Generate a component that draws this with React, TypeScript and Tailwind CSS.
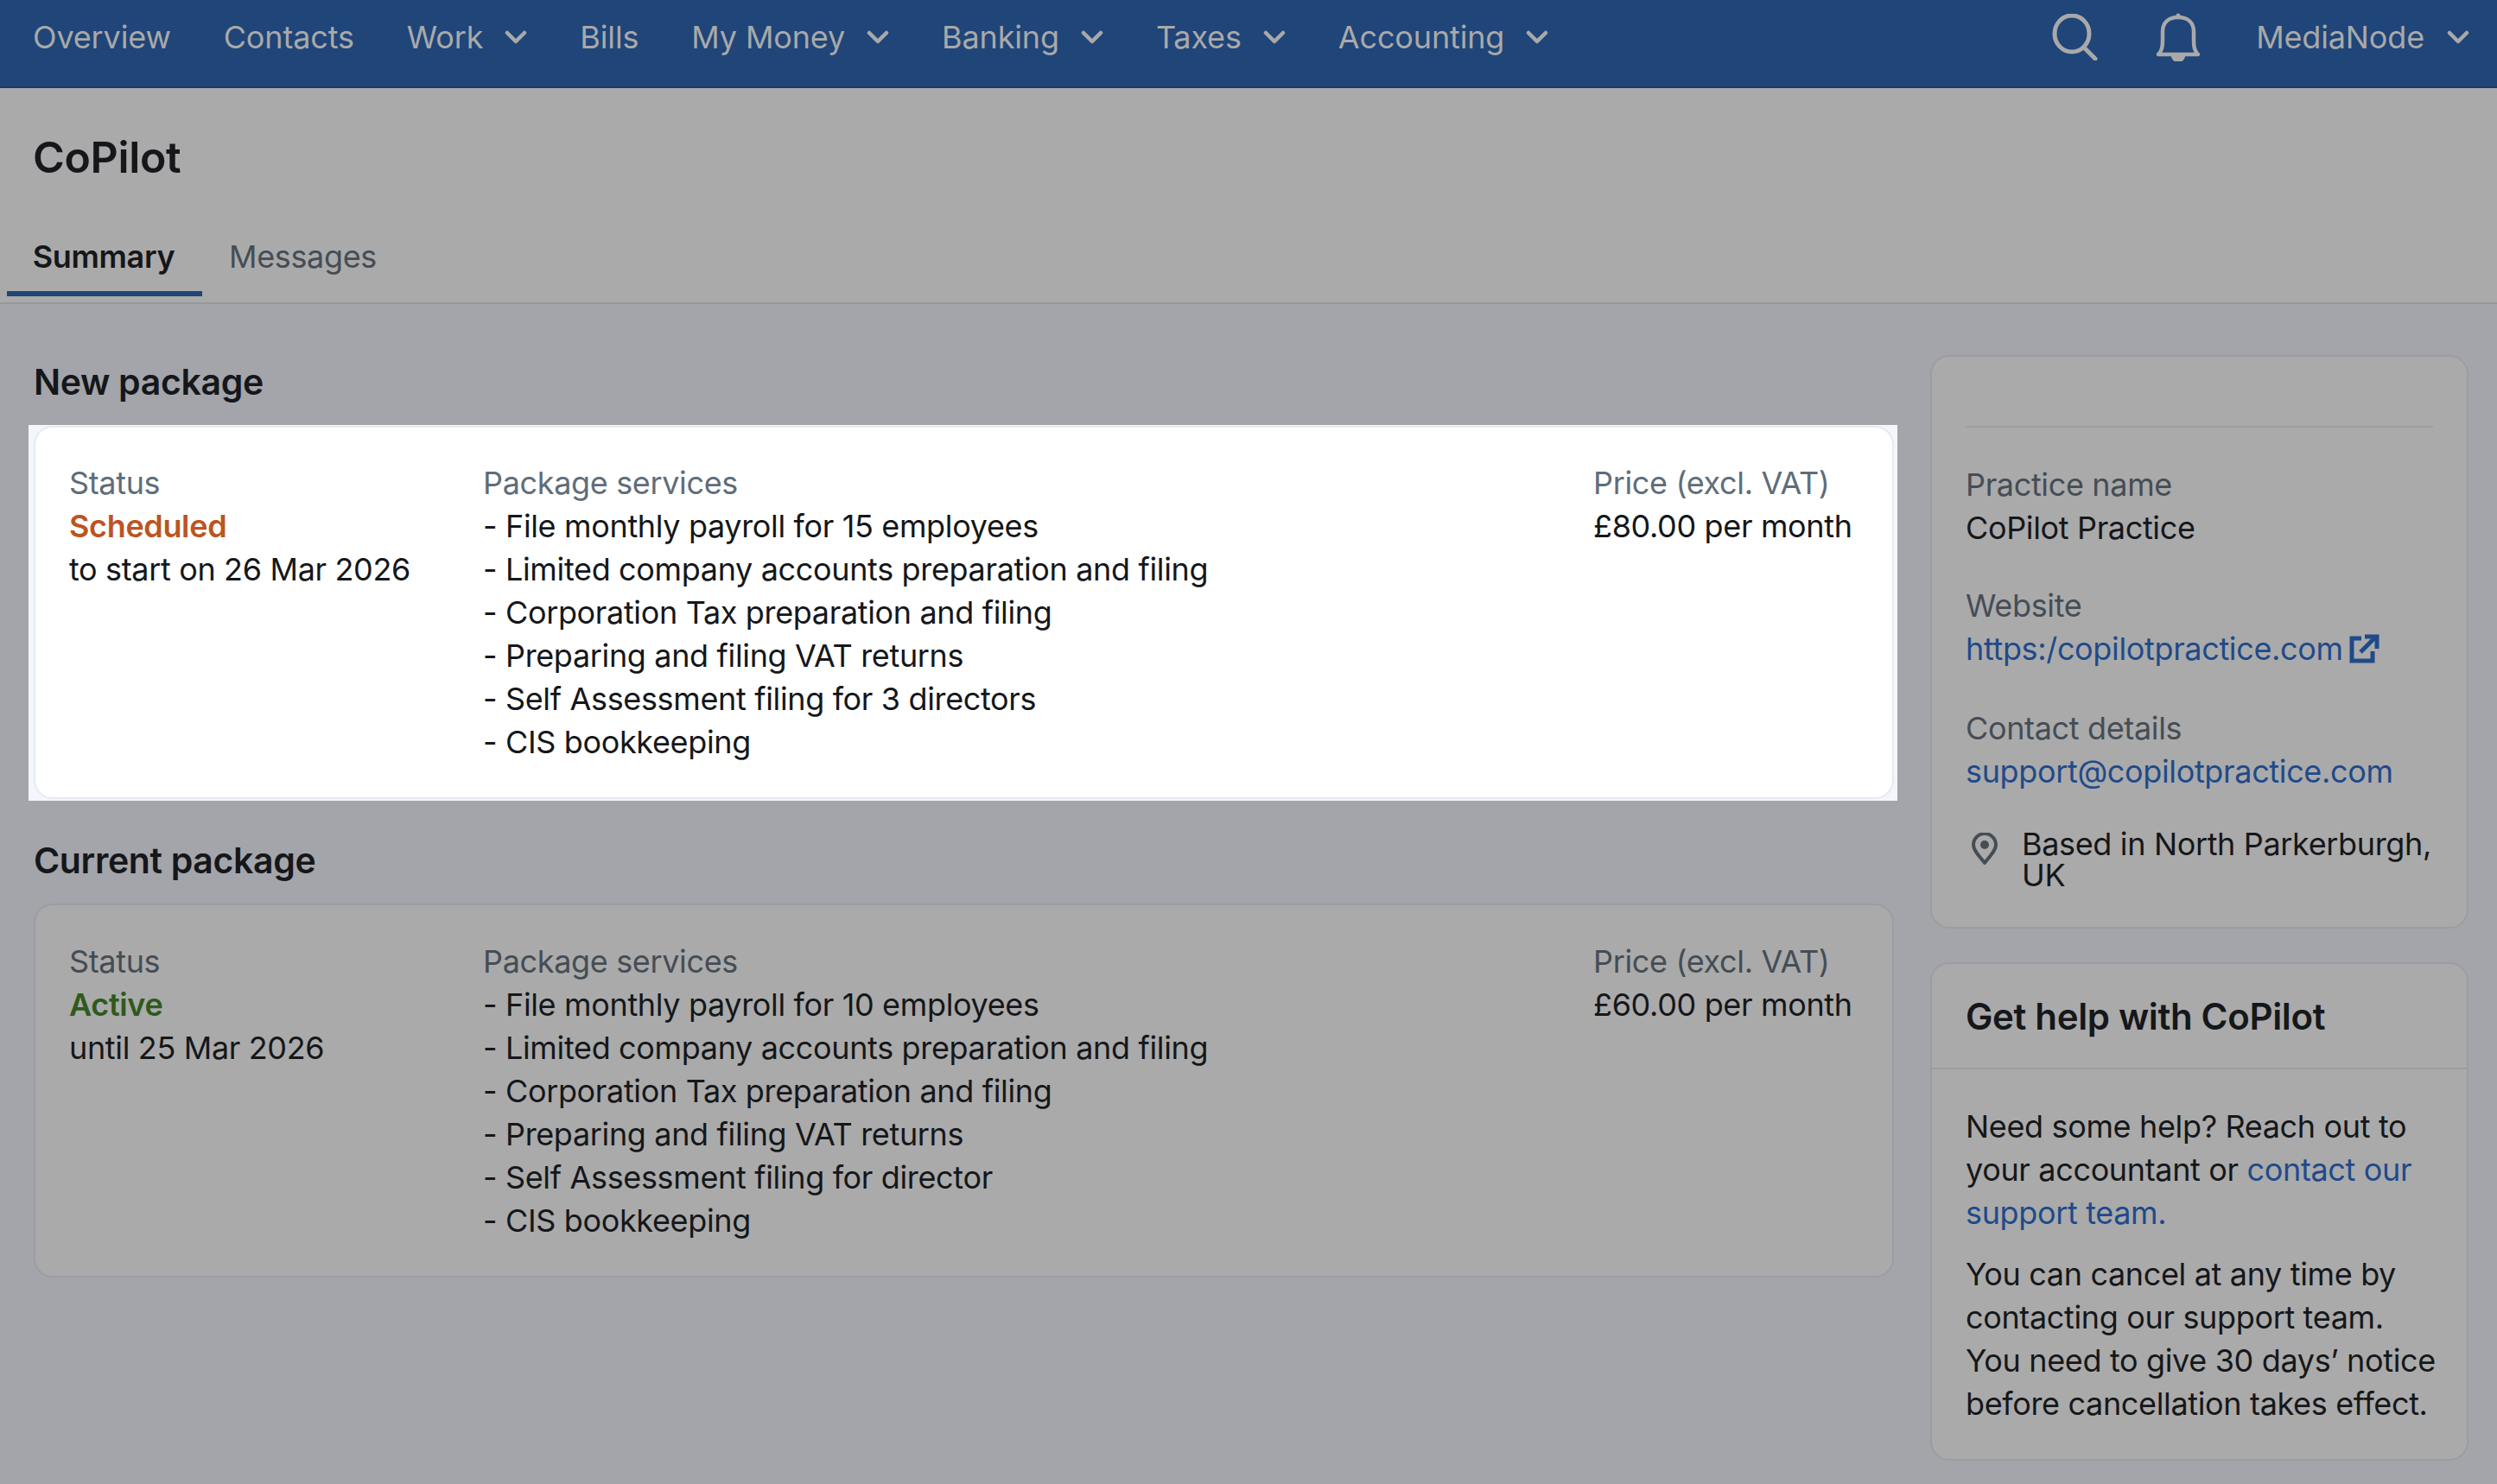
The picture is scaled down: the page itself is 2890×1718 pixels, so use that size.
const NAV_ITEMS = [
  { label: 'Overview' },
  { label: 'Contacts' },
  { label: 'Work', menu: true },
  { label: 'Bills' },
  { label: 'My Money', menu: true },
  { label: 'Banking', menu: true },
  { label: 'Taxes', menu: true },
  { label: 'Accounting', menu: true },
]

const NEW_SERVICES = [
  '- File monthly payroll for 15 employees',
  '- Limited company accounts preparation and filing',
  '- Corporation Tax preparation and filing',
  '- Preparing and filing VAT returns',
  '- Self Assessment filing for 3 directors',
  '- CIS bookkeeping',
]

const CURRENT_SERVICES = [
  '- File monthly payroll for 10 employees',
  '- Limited company accounts preparation and filing',
  '- Corporation Tax preparation and filing',
  '- Preparing and filing VAT returns',
  '- Self Assessment filing for director',
  '- CIS bookkeeping',
]

const Chevron = () => (
  <svg className="h-[16px] w-[26px]" viewBox="0 0 26 16" fill="none" stroke="currentColor" strokeWidth="4.5" strokeLinecap="round" strokeLinejoin="round">
    <path d="M3 3 L13 13 L23 3" />
  </svg>
)

interface PackageRowProps {
  statusLabel: string
  statusClass: string
  statusNote: string
  services: string[]
  price: string
  labelClass: string
}

const PackageRow = ({ statusLabel, statusClass, statusNote, services, price, labelClass }: PackageRowProps) => (
  <div className="flex px-[39px] py-[39px]">
    <div className="w-[479px] shrink-0">
      <div className={labelClass}>Status</div>
      <div className={`font-semibold ${statusClass}`}>{statusLabel}</div>
      <div>{statusNote}</div>
    </div>
    <div className="w-[1285px] shrink-0">
      <div className={labelClass}>Package services</div>
      {services.map((service) => (
        <div key={service}>{service}</div>
      ))}
    </div>
    <div className="whitespace-nowrap">
      <div className={labelClass}>Price (excl. VAT)</div>
      <div>{price}</div>
    </div>
  </div>
)

export default function App() {
  return (
    <div className="h-[1718px] w-[2890px] overflow-hidden bg-[#a3a5aa] font-['Inter',sans-serif] text-[36px] leading-[50px] tracking-[-0.35px] text-[#15171a]">
      <nav className="flex h-[102px] items-start border-b-2 border-[#1a3a66] bg-[#1f4579] pl-[38px] pr-[32px] tracking-[-0.15px] text-[#a9a9a9]">
        <div className="flex h-[86px] flex-1 items-center gap-[61px]">
          {NAV_ITEMS.map((item) => (
            <div key={item.label} className="flex items-center gap-[25px]">
              <span>{item.label}</span>
              {item.menu && <Chevron />}
            </div>
          ))}
        </div>
        <div className="flex h-[86px] items-center">
          <svg className="mr-[66px] h-[54px] w-[54px]" viewBox="0 0 54 54" fill="none" stroke="currentColor" strokeWidth="5" strokeLinecap="round">
            <ellipse cx="23" cy="23" rx="20" ry="21" />
            <path d="M37 39 L50 52" />
          </svg>
          <svg className="mr-[64px] h-[56px] w-[52px]" viewBox="0 0 52 56" fill="none" stroke="currentColor" strokeWidth="4.5" strokeLinejoin="round">
            <path d="M3 48 C7 44 8 40 8 30 L8 22 C8 11 15 5 26 5 C37 5 44 11 44 22 L44 30 C44 40 45 44 49 48 Z" />
            <path d="M20 49 a6 6 0 0 0 12 0 Z" fill="currentColor" />
            <circle cx="26" cy="3" r="2.5" fill="currentColor" stroke="none" />
          </svg>
          <span>MediaNode</span>
          <div className="ml-[26px]">
            <Chevron />
          </div>
        </div>
      </nav>

      <header className="h-[250px] border-b-2 border-[#97989e] bg-[#aaaaaa]">
        <h1 className="pl-[38px] pt-[50px] text-[50px] font-semibold leading-[60px]">CoPilot</h1>
        <div className="mt-[43px] flex pl-[8px]">
          <div className="flex h-[88px] w-[226px] items-start justify-center border-b-[6px] border-[#1f4579] pr-[2px] pt-[17px] font-semibold">
            Summary
          </div>
          <div className="ml-[31px] pt-[17px] text-[#454d55]">Messages</div>
        </div>
      </header>

      <main className="flex pl-[33px]">
        <div className="w-[2163px] shrink-0">
          <h2 className="ml-[6px] mt-[65px] text-[41px] font-semibold leading-[50px]">New package</h2>
          <div className="mt-[25px] bg-[#f3f6fb] pb-[2px] pl-[6px] pr-[4px] pt-[1px]">
            <div className="rounded-[22px] border-2 border-[#e6eaf1] bg-white">
              <PackageRow
                statusLabel="Scheduled"
                statusClass="text-[#bb5521]"
                statusNote="to start on 26 Mar 2026"
                services={NEW_SERVICES}
                price="£80.00 per month"
                labelClass="text-[#5f6d79]"
              />
            </div>
          </div>
          <h2 className="ml-[6px] mt-[44px] text-[41px] font-semibold leading-[50px]">Current package</h2>
          <div className="ml-[6px] mr-[4px] mt-[25px] rounded-[22px] border-2 border-[#9c9da3] bg-[#aaaaaa]">
            <div className="pt-[1px]">
              <PackageRow
                statusLabel="Active"
                statusClass="text-[#2e5a1c]"
                statusNote="until 25 Mar 2026"
                services={CURRENT_SERVICES}
                price="£60.00 per month"
                labelClass="text-[#454d55]"
              />
            </div>
          </div>
        </div>

        <aside className="ml-[38px] w-[623px] shrink-0 pt-[59px]">
          <div className="rounded-[22px] border-2 border-[#9c9da3] bg-[#aaaaaa] px-[39px] pb-[42px] pt-[80px]">
            <div className="h-[2px] bg-[#9c9da3]" />
            <div className="mt-[41px] text-[#454d55]">Practice name</div>
            <div>CoPilot Practice</div>
            <div className="mt-[40px] text-[#454d55]">Website</div>
            <div className="flex items-center text-[#1f4a8a]">
              https:/copilotpractice.com
              <svg className="ml-[6px] h-[36px] w-[36px]" viewBox="0 0 36 36" fill="none" stroke="currentColor" strokeWidth="5">
                <path d="M15 6 H4 V32 H28 V21" />
                <path d="M14 22 L31 5" />
                <path d="M19 4 H33 V18" />
              </svg>
            </div>
            <div className="mt-[42px] text-[#454d55]">Contact details</div>
            <div className="text-[#1f4a8a]">support@copilotpractice.com</div>
            <div className="mt-[41px] flex">
              <svg className="ml-[6px] mt-[5px] h-[38px] w-[32px] shrink-0 text-[#454d55]" viewBox="0 0 32 38" fill="none">
                <path d="M16 35 C10 27 3 21 3 14 A13 13 0 0 1 29 14 C29 21 22 27 16 35 Z" stroke="currentColor" strokeWidth="4" strokeLinejoin="round" />
                <circle cx="16" cy="14" r="5" fill="currentColor" />
              </svg>
              <div className="ml-[27px] leading-[36px]">Based in North Parkerburgh, UK</div>
            </div>
          </div>

          <div className="mt-[39px] rounded-[22px] border-2 border-[#9c9da3] bg-[#aaaaaa]">
            <div className="border-b-2 border-[#9c9da3] px-[39px] pb-[32px] pt-[34px] text-[42px] font-semibold leading-[54px]">
              Get help with CoPilot
            </div>
            <div className="pb-[39px] pl-[39px] pr-[20px] pt-[41px]">
              <p>
                Need some help? Reach out to
                <br />
                your accountant or <span className="text-[#1f4a8a]">contact our</span>
                <br />
                <span className="text-[#1f4a8a]">support team.</span>
              </p>
              <p className="mt-[21px]">
                You can cancel at any time by
                <br />
                contacting our support team.
                <br />
                You need to give 30 days’ notice
                <br />
                before cancellation takes effect.
              </p>
            </div>
          </div>
        </aside>
      </main>
    </div>
  )
}
